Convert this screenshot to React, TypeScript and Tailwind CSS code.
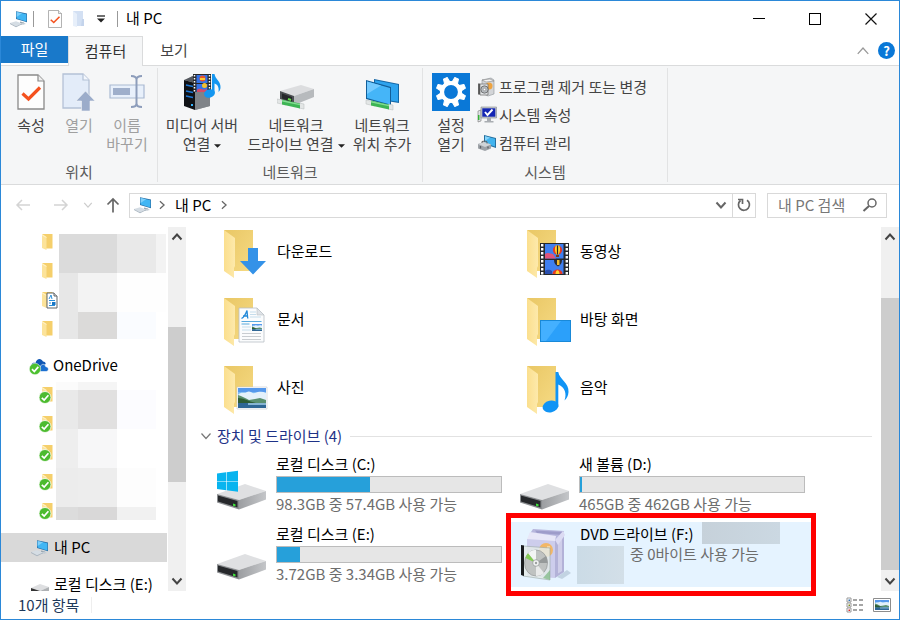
import type { ReactNode } from "react";

/* ---------- small icons ---------- */

function PcIcon({ className = "h-5 w-5" }: { className?: string }) {
  return (
    <svg viewBox="0 0 20 20" className={className} aria-hidden="true">
      <path d="M7 2.2 18 4.6v8.6L7 10z" fill="#2b6ea3" />
      <path d="M7.6 3 17.4 5.2v7.2L7.6 9.4z" fill="#41b6f4" />
      <path d="M7.6 3 13 4.2 7.6 8z" fill="#7fd0fb" />
      <path d="M11 12.4l4 1.2v1.6l-4-.8z" fill="#9aa7b2" />
      <path d="M9 14.2l6-.4 2 1.2-5 1z" fill="#c3ccd4" />
      <path d="M1 14l6-1.8 6 2.2-6 2.8z" fill="#d5dde4" />
      <path d="M1 14l6 3.2v1L1 15zM7 17.2l6-2.8v.8l-6 3z" fill="#a9b5c0" />
    </svg>
  );
}

function CheckPage({ className }: { className: string }) {
  return (
    <svg viewBox="0 0 28 36" className={className} aria-hidden="true">
      <path d="M1 1h20l6 6v28H1z" fill="#fdfdfd" stroke="#8a8a8a" strokeWidth="1.3" />
      <path d="M21 1v6h6" fill="#eee" stroke="#8a8a8a" strokeWidth="1.2" />
      <path d="M5.500 19.500l6 5.500L23 13.500" fill="none" stroke="#f4511e" strokeWidth="3.200" />
    </svg>
  );
}

function Caret() {
  return (
    <svg viewBox="0 0 8 4" className="ml-1 inline-block h-1 w-[7px] align-middle" aria-hidden="true">
      <path d="M0 0h8L4 4z" fill="#222" />
    </svg>
  );
}

function Chevron({ className, color, weight = 1.5 }: { className: string; color: string; weight?: number }) {
  return (
    <svg viewBox="0 0 12 12" className={className} aria-hidden="true">
      <path d="M1.500 3.500 6 8.500l4.500-5" fill="none" stroke={color} strokeWidth={weight} />
    </svg>
  );
}

function SmallFolder({ badge }: { badge?: "doc" | "sync" }) {
  return (
    <svg viewBox="0 0 20 20" className="h-5 w-5 overflow-visible" aria-hidden="true">
      <path d="M4 2h10.500v14.500H7z" fill="#f5cf6b" />
      <path d="M4 2l4.500 3v13L4 16z" fill="#fce39a" />
      <path d="M4 2l4.500 3v1L4 3.500z" fill="#fff1c4" />
      {badge === "doc" && (
        <g>
          <path d="M9 3h7l3 3v12H9z" fill="#fff" stroke="#5f6468" />
          <path d="M16 3v3h3" fill="#ddd" stroke="#5f6468" />
          <path d="M11 9l2-4 1 4M11 10.500h6M11 13h2M11 15.500h6" stroke="#2b8fd9" fill="none" />
          <path d="M14 12h3.500v3H14z" fill="#1976c5" />
        </g>
      )}
      {badge === "sync" && (
        <g>
          <circle cx="7" cy="12.500" r="6" fill="#4cbb2f" stroke="#fff" strokeWidth=".8" />
          <path d="M3.800 12.800l2.400 2.300 4.200-4.800" fill="none" stroke="#fff" strokeWidth="1.700" />
        </g>
      )}
    </svg>
  );
}

function OneDriveIcon() {
  return (
    <svg viewBox="0 0 20 18" className="h-[18px] w-5" aria-hidden="true">
      <path d="M3 11c-2-4 1-6 3.500-5C7.500 1.500 12 .3 14 4.500c1.700 0 2.700 1.200 2.700 2.600L9 12z" fill="#0f56b3" />
      <path d="M8 14.500c-1-4 1.800-5.200 3.200-4.500 1-3.800 5-3.300 5.600-.3 3.600.3 3.300 4.800.2 4.800z" fill="#1b6fd0" stroke="#fff" strokeWidth=".6" />
      <circle cx="6" cy="12" r="5.700" fill="#4cc02f" stroke="#fff" strokeWidth=".5" />
      <path d="M3 12.200l2.300 2.300 4-4.600" fill="none" stroke="#fff" strokeWidth="1.700" />
    </svg>
  );
}

/* ---------- ribbon icons ---------- */

function OpenIcon() {
  return (
    <svg viewBox="0 0 34 38" className="h-[38px] w-[34px]" aria-hidden="true">
      <path d="M1 1h20l6 6v28H1z" fill="#e3ecf9" stroke="#b4c1d6" strokeWidth="1.3" />
      <path d="M21 1v6h6" fill="#f3f7fd" stroke="#b4c1d6" strokeWidth="1.2" />
      <path d="M23.500 18l9.500 10h-5v10h-8.500V28H14z" fill="#9bacca" stroke="#f5f6f7" strokeWidth=".6" />
    </svg>
  );
}

function RenameIcon() {
  return (
    <svg viewBox="0 0 36 36" className="h-9 w-9" aria-hidden="true">
      <path d="M1 11h34v13H1z" fill="#e8f0fb" stroke="#aab9d2" strokeWidth="1.2" />
      <path d="M4 14h17v7H4z" fill="#9fafcb" />
      <path d="M22 2c3 0 5.500 1 5.500 3.500v24c0 2.500-2.500 3.500-5.500 3.500M33 2c-3 0-5.500 1-5.500 3.500v24c0 2.500 2.500 3.500 5.500 3.500" fill="none" stroke="#8d9dbb" strokeWidth="2" />
    </svg>
  );
}

function MediaServerIcon() {
  return (
    <svg viewBox="0 0 40 38" className="h-[38px] w-10" aria-hidden="true">
      <path d="M2 8l10-6 16 5v26l-15 4z" fill="#90949a" />
      <path d="M13 11l15-3v25l-15 4z" fill="#7f8388" />
      <path d="M2 7l11 3v27L2 33z" fill="#101216" />
      <path d="M2 7l9-4 8 2-6 5z" fill="#55595f" />
      <path d="M4 12l7 1.500M4 18l7 1.500M4 23l7 1.500" stroke="#1e78d6" strokeWidth="1.700" />
      <path d="M9 31h2v2H9z" fill="#36b5ff" />
      <path d="M11 1h18v18H11z" fill="#26282c" />
      <path d="M12.500 2v17M27.500 2v17" stroke="#fff" strokeWidth="1.500" strokeDasharray="1.500 1.500" />
      <path d="M14.500 2h11v8h-11zM14.500 11h11v8h-11z" fill="#3572e6" />
      <circle cx="20.500" cy="5.500" r="3" fill="#e8552c" />
      <path d="M18 5h5v2h-5z" fill="#f8ca35" />
      <circle cx="22.500" cy="12.500" r="2.500" fill="#f6c02f" />
      <path d="M15 17c3-3 6 1 10-1v3H15z" fill="#d64b68" />
      <ellipse cx="27.500" cy="20.500" rx="5.500" ry="4.200" fill="#1496f0" transform="rotate(-15 27.500 20.500)" />
      <path d="M30 1h2.500c.6 5 6.800 7.500 6 14-.3 2-1 3-2 4 .8-5-1-7.500-4-8.500V20H30z" fill="#1496f0" />
    </svg>
  );
}

function Cable() {
  return (
    <g>
      <path d="M0 26l9 2v4l-9-2z" fill="#e3e6e6" stroke="#b5baba" strokeWidth=".5" />
      <path d="M22 30l5 1v5l-5-1z" fill="#e3e6e6" stroke="#b5baba" strokeWidth=".5" />
      <path d="M5 26.500l18 4v5L5 31.500z" fill="#3db554" />
      <path d="M5 27l18 4v1.200L5 28.500z" fill="#86dc94" />
    </g>
  );
}

function NetDriveIcon() {
  return (
    <svg viewBox="0 0 38 38" className="h-[38px] w-[38px]" aria-hidden="true">
      <path d="M3 18l21-6 13 4-20 7z" fill="#dcdddf" />
      <path d="M17 23l20-7v8L17 32z" fill="#b7babd" />
      <path d="M3 18l14 5v8L3 26z" fill="#4b4f52" />
      <path d="M5 20.500l10 3.500v5L5 25.500z" fill="#24272a" />
      <path d="M11 26l3 1" stroke="#63e04c" strokeWidth="2" />
      <Cable />
    </svg>
  );
}

function NetPlaceIcon() {
  return (
    <svg viewBox="0 0 36 38" className="h-[38px] w-9" aria-hidden="true">
      <path d="M10 6l25 5v19l-25-4z" fill="#1466a5" />
      <path d="M11 7.200l23 4.600v17L11 25z" fill="#2ea3ee" />
      <path d="M2 7l25 7v19L2 26z" fill="#125e99" />
      <path d="M3 8.500l23 6.500v16.500L3 25z" fill="#45b5f8" />
      <path d="M3 8.500l14 4L3 21z" fill="#74caff" />
      <g transform="translate(2 1)">
        <Cable />
      </g>
    </svg>
  );
}

function GearTile() {
  const teeth = [0, 45, 90, 135, 180, 225, 270, 315];
  return (
    <svg viewBox="0 0 38 38" className="h-[38px] w-[38px]" aria-hidden="true">
      <path d="M0 0h38v38H0z" fill="#0a78d7" />
      <circle cx="19" cy="19" r="9" fill="none" stroke="#fff" strokeWidth="4.200" />
      {teeth.map((a) => (
        <path key={a} d="M16.200 9l.8-4.800h4l.8 4.800z" fill="#fff" stroke="#fff" strokeLinejoin="round" transform={`rotate(${a + 22.5} 19 19)`} />
      ))}
    </svg>
  );
}

function UninstallIcon() {
  return (
    <svg viewBox="0 0 20 20" className="h-5 w-5" aria-hidden="true">
      <path d="M5 3l9-2 3 2v14l-6 2-6-3z" fill="#d3d5d8" stroke="#8f9398" strokeWidth=".6" />
      <path d="M5 3l8-1 4 2-8 1z" fill="#f5f5f5" stroke="#777" strokeWidth=".5" />
      <circle cx="12" cy="9" r="3.500" fill="#eda340" />
      <path d="M3 7h8v11H3z" fill="#e3e6e8" stroke="#777" strokeWidth=".8" />
      <path d="M2 6.500v11" stroke="#333" strokeWidth="1.500" />
      <circle cx="7.500" cy="12.500" r="3.700" fill="#b4b9bd" stroke="#555" strokeWidth=".7" />
      <circle cx="7.500" cy="12.500" r="1.200" fill="#fff" stroke="#777" strokeWidth=".5" />
    </svg>
  );
}

function SystemIcon() {
  return (
    <svg viewBox="0 0 20 20" className="h-5 w-5" aria-hidden="true">
      <path d="M1 6l3-1v11l-3 1z" fill="#dfe2e5" stroke="#777" strokeWidth=".6" />
      <path d="M1.700 10v5" stroke="#35b335" strokeWidth="1.500" />
      <path d="M4 2h15.500v11H4z" fill="#c6cace" stroke="#84898e" strokeWidth=".6" />
      <path d="M5.300 3.300h13v8.400h-13z" fill="#1426b4" />
      <path d="M8 7l2.500 3 5-5.500" fill="none" stroke="#fff" strokeWidth="1.900" />
      <path d="M10 13h4v3h-4zM7.500 16h9v1.500h-9z" fill="#a9adb2" />
    </svg>
  );
}

function ManageIcon() {
  return (
    <svg viewBox="0 0 20 20" className="h-5 w-5" aria-hidden="true">
      <path d="M7 2l12 3v10L7 11z" fill="#27709f" />
      <path d="M8 3.200l10 2.500v7.800l-10-3.200z" fill="#42b4ef" />
      <path d="M8 3.200l5 1.200L8 8z" fill="#86d4fa" />
      <path d="M1 11l6-2 7 2.500v4L8 18l-7-2.500z" fill="#9ea3a8" />
      <path d="M1 11l6-2 7 2.500-6 2.500z" fill="#d0d4d7" />
      <path d="M5 10v-1.500l3-.5 2 .8v1.700" fill="none" stroke="#666" />
      <path d="M3.500 13v2.500M11 13.500v2" stroke="#5d6166" strokeWidth="1.300" />
    </svg>
  );
}

/* ---------- large item icons ---------- */

function LargeFolder({ children }: { children: ReactNode }) {
  return (
    <svg viewBox="0 0 52 50" className="h-[50px] w-[52px] shrink-0" aria-hidden="true">
      <defs>
        <linearGradient id="folderBack" x1="0" y1="0" x2="1" y2="1">
          <stop offset="0" stopColor="#e9c765" />
          <stop offset="1" stopColor="#f6da83" />
        </linearGradient>
        <linearGradient id="folderFlap" x1="0" y1="0" x2="1" y2="0">
          <stop offset="0" stopColor="#fbdf8e" />
          <stop offset="1" stopColor="#fde9ab" />
        </linearGradient>
      </defs>
      <path d="M8 2h29v41H17z" fill="url(#folderBack)" />
      <path d="M8 2l11 8v28l-1 2v10L8 43z" fill="url(#folderFlap)" />
      {children}
    </svg>
  );
}

function Scenery({ x, y, w, h }: { x: number; y: number; w: number; h: number }) {
  return (
    <svg x={x} y={y} width={w} height={h} viewBox="0 0 28 20" preserveAspectRatio="none">
      <path d="M0 0h28v20H0z" fill="#7ab8f2" />
      <path d="M0 0h28v4H0z" fill="#5598ec" />
      <path d="M0 7c3-4 6-1 9-3s5 2 8 1 7-2 11 0v9H0z" fill="#e3f0fb" />
      <path d="M0 7c4 1 7 3 11 5l6-1 5-1 6 2v3H0z" fill="#5a9070" />
      <path d="M0 10c5 0 10 3 18 5H0z" fill="#2d5c35" />
      <path d="M0 15h28v5H0z" fill="#2e6695" />
      <path d="M10 15h18v2H10z" fill="#86b4d3" />
    </svg>
  );
}

function Balloons({ y }: { y: number }) {
  return (
    <g transform={`translate(0 ${y})`}>
      <path d="M26 0h18.500v14.500H26z" fill="#3f7ff0" />
      <path d="M26 10c3-2 6 0 8 0l3 4.500H26z" fill="#e0547c" />
      <circle cx="38.500" cy="6" r="4.600" fill="#e83a22" />
      <path d="M36.800 1.500c-1.500 3-1 6 .7 9h2c1.700-3 2.200-6 .7-9z" fill="#ffd42e" />
      <path d="M38.500 1.500v9" stroke="#262626" strokeWidth="1.200" />
      <path d="M37 11h3v2h-3z" fill="#7a3b18" />
    </g>
  );
}

const downloads = <path d="M32 20h10v13h8L37 46.500 24 33h8z" fill="#3492e8" />;

const documents = (
  <g>
    <path d="M23 12h18l7 7v27H23z" fill="#fbfcfd" stroke="#b9bfc5" strokeWidth=".8" />
    <path d="M41 12v7h7z" fill="#dfe3e8" stroke="#b9bfc5" strokeWidth=".6" />
    <path d="M25.500 22.500c2-1 4-4 5.500-8 .3 3 .3 5 .8 8M27 20h4.500" fill="none" stroke="#2389d8" strokeWidth="1.300" />
    <path d="M34 16h6M34 18.500h6M34 21h11M26 31h9M26 34h9" stroke="#c5ddec" />
    <path d="M25.500 25.500h20M25.500 28h8" stroke="#58aade" strokeWidth="1.200" />
    <path d="M26 37.500h19M26 40.500h19M26 43.500h19" stroke="#c9cdd1" />
    <Scenery x={36} y={28} w={10} h={7} />
  </g>
);

const pictures = (
  <g>
    <path d="M21 23h30v22H21z" fill="#fff" stroke="#c3c8cc" strokeWidth=".6" />
    <Scenery x={22} y={24} w={28} h={20} />
  </g>
);

const videos = (
  <g>
    <path d="M21 15h29v32H21z" fill="#27292c" />
    <path d="M23.200 16v31M47.800 16v31" stroke="#fff" strokeWidth="2.400" strokeDasharray="2.400 1.600" />
    <Balloons y={16} />
    <path d="M26 32h18.500v14H26z" fill="#3f7ff0" />
    <path d="M35 32c0 3.500 1.500 5 4 6.500 2.500-1.500 4-3 4-6.500z" fill="#2d2d34" />
    <path d="M38 32h2.500v5H38z" fill="#f5bb2c" />
    <path d="M26 43c3-2 5-1 7 0v3h-7z" fill="#2a4fae" />
    <path d="M33.500 46c0-6 10-6 10 0z" fill="#e83a22" />
    <path d="M36.500 46c0-5 4-5 4 0z" fill="#ffd42e" />
  </g>
);

const desktop = (
  <g>
    <path d="M21 24h31v22H21z" fill="#1989d8" />
    <path d="M22 25h29v20H22z" fill="#2ba0fa" />
    <path d="M22 25h20L27 45h-5z" fill="#44b0ff" />
  </g>
);

const music = (
  <g fill="#1094f5">
    <ellipse cx="31.500" cy="42.500" rx="8" ry="5.800" transform="rotate(-12 31.500 42.500)" />
    <path d="M36.500 8h2.800c.8 7 11 11 10.200 20-.3 4-1.500 6-4 8.500 2.400-7 .5-13-6.200-16V43h-2.800z" />
  </g>
);

function DriveIcon({ system = false }: { system?: boolean }) {
  return (
    <svg viewBox="0 0 52 60" className="h-[60px] w-[52px] shrink-0" aria-hidden="true">
      <defs>
        <linearGradient id="driveSide" x1="0" y1="0" x2="1" y2="0">
          <stop offset="0" stopColor="#9c9ea1" />
          <stop offset="1" stopColor="#c4c6c9" />
        </linearGradient>
      </defs>
      <path d="M1 42l28-10 21 7-27 9z" fill="#dfe0e2" />
      <path d="M23 48l27-9v8.500L23 57.500z" fill="url(#driveSide)" />
      <path d="M1 42l22 6v9.500L1 50.500z" fill="#8b8e91" />
      <path d="M2 43.500l19.500 5.500v6.500L2 49.500z" fill="#26282b" />
      <path d="M17 51.500l2.500.7v2.300l-2.500-.7z" fill="#3fe03a" />
      {system && <path d="M1 21.500l9-1.200v8.700H1zM10.600 20.200L22 18.700v10.300H10.600zM1 29.600h9v8.600l-9-1.200zM10.600 29.600H22v10.200l-11.400-1.500z" fill="#08b4ef" />}
    </svg>
  );
}

function DvdIcon() {
  return (
    <svg viewBox="0 0 52 60" className="h-[60px] w-[52px] shrink-0" aria-hidden="true">
      <path d="M38 55l10-7 4 3-9 6z" fill="#9fb3c6" opacity=".5" />
      <path d="M8 17l28-1v40L8 54z" fill="#cdcdec" />
      <path d="M36 16l9-4v38l-9 6z" fill="#b3b2d8" />
      <path d="M39 18l4-2v33l-4 2.500z" fill="#cfcee9" />
      <path d="M14 7l31 2-4 9-31-5z" fill="#b7b6dd" />
      <path d="M16 8.500l28 1.500-1 3-25-2z" fill="#9e9cca" />
      <path d="M8 17l3-7 26 4-1 5z" fill="#e8e7f8" />
      <path d="M36 18l8-9 2 4-7 10z" fill="#dcdbf3" />
      <circle cx="27" cy="28" r="7" fill="#f2b767" />
      <path d="M28 24h3v4h-3z" fill="#f8d59e" />
      <path d="M4 24l27 2v32L4 54z" fill="#e4ebe9" opacity=".85" stroke="#9aa8a5" strokeWidth=".7" />
      <path d="M2 23l3 .5V54l-3-1z" fill="#191b1d" />
      <ellipse cx="17" cy="41" rx="11.500" ry="13" fill="#bfc2c1" stroke="#8d9190" strokeWidth=".6" />
      <path d="M17 41L9 31.500c2-2.500 5-4 8-3.500z" fill="#f3f4f4" />
      <path d="M17 41l8 10c-2 2-5 3-8 3z" fill="#e9eaea" />
      <path d="M17 41l-10.500-5c.5-2 1.500-3.500 2.500-4.800z" fill="#85cb55" />
      <path d="M17 41l10-7c1 2 1.500 4 1.500 7z" fill="#969a9a" />
      <circle cx="17" cy="41" r="3.300" fill="#f2f3f3" stroke="#8d9190" strokeWidth=".7" />
      <circle cx="17" cy="41" r="1.200" fill="#9da1a0" />
      <path d="M24 56l7-8v10z" fill="#79b57f" opacity=".7" />
    </svg>
  );
}

/* ---------- ribbon ---------- */

function RibbonButton({ icon, lines, caret = false, disabled = false, width }: { icon: ReactNode; lines: string[]; caret?: boolean; disabled?: boolean; width: string }) {
  return (
    <button type="button" disabled={disabled} className={`flex flex-col items-center whitespace-nowrap ${width} ${disabled ? "text-[#a0a0a0]" : "text-[#444]"}`}>
      <span className="mb-1 flex h-[38px] items-center justify-center">{icon}</span>
      {lines.map((line, i) => (
        <span key={line} className="block leading-[19px]">
          {line}
          {caret && i === lines.length - 1 && <Caret />}
        </span>
      ))}
    </button>
  );
}

function RibbonGroup({ label, width, inset, children }: { label: string; width: string; inset: string; children: ReactNode }) {
  return (
    <section aria-label={label} className={`my-[2px] flex flex-col justify-between border-r border-[#e2e3e4] pt-[5px] ${width}`}>
      <div className={`flex ${inset}`}>{children}</div>
      <div className="text-center leading-5 text-[#5a5a5a]">{label}</div>
    </section>
  );
}

function RibbonLink({ icon, children }: { icon: ReactNode; children: string }) {
  return (
    <button type="button" className="flex h-7 items-center gap-[2px] whitespace-nowrap text-[#444]">
      {icon}
      {children}
    </button>
  );
}

/* ---------- scroll bar ---------- */

function ScrollBar({ before, thumb, after }: { before: number; thumb: number; after: number }) {
  return (
    <div className="flex w-[18px] shrink-0 flex-col bg-[#f0f0f0]" aria-hidden="true">
      <div className="flex h-5 items-center justify-center">
        <Chevron className="h-3 w-3 rotate-180" color="#444" weight={2} />
      </div>
      <div className="flex flex-1 flex-col">
        <div style={{ flexGrow: before }} />
        <div className="bg-[#cdcdcd]" style={{ flexGrow: thumb }} />
        <div style={{ flexGrow: after }} />
      </div>
      <div className="flex h-5 items-center justify-center">
        <Chevron className="h-3 w-3" color="#444" weight={2} />
      </div>
    </div>
  );
}

/* ---------- files ---------- */

const folders = [
  { name: "다운로드", art: downloads },
  { name: "동영상", art: videos },
  { name: "문서", art: documents },
  { name: "바탕 화면", art: desktop },
  { name: "사진", art: pictures },
  { name: "음악", art: music },
];

const drives = [
  { name: "로컬 디스크 (C:)", usage: "98.3GB 중 57.4GB 사용 가능", used: 41.6, system: true },
  { name: "새 볼륨 (D:)", usage: "465GB 중 462GB 사용 가능", used: 1, system: false },
  { name: "로컬 디스크 (E:)", usage: "3.72GB 중 3.34GB 사용 가능", used: 10.2, system: false },
];

function Drive({ name, usage, used, system }: (typeof drives)[number]) {
  return (
    <li className="flex gap-2 pr-[6px] pl-2">
      <DriveIcon system={system} />
      <div className="flex-1">
        <div className="leading-6">{name}</div>
        <div role="meter" aria-label={name} aria-valuenow={used} aria-valuemin={0} aria-valuemax={100} className="h-[17px] border border-[#bcbcbc] bg-[#e6e6e6]">
          <div className="h-full bg-[#26a0da]" style={{ width: `${used}%` }} />
        </div>
        <div className="leading-[22px] text-[#6d6d6d]">{usage}</div>
      </div>
    </li>
  );
}

export default function App() {
  return (
    <div className="flex h-screen flex-col overflow-hidden border border-[#2b88d8] bg-white font-['Noto_Sans_CJK_KR',sans-serif] text-[15px] text-black">
      <header className="flex h-[35px] shrink-0 items-center">
        <PcIcon className="ml-2 h-5 w-5" />
        <span className="ml-1 h-4 w-px bg-[#999]" />
        <button type="button" aria-label="속성" className="ml-[14px]">
          <CheckPage className="h-[18px] w-[14px]" />
        </button>
        <button type="button" aria-label="새 폴더" className="ml-[10px]">
          <svg viewBox="0 0 14 18" className="h-[18px] w-[14px]" aria-hidden="true">
            <path d="M1 1h10v15H1z" fill="#d3e0f3" />
            <path d="M1 1l4 3v13l-4-1z" fill="#e7effa" />
            <path d="M10 9h2v7h-3z" fill="#c4d4ec" />
          </svg>
        </button>
        <button type="button" aria-label="빠른 실행 도구 모음 사용자 지정" className="ml-[11px]">
          <svg viewBox="0 0 8 8" className="h-2 w-2" aria-hidden="true">
            <path d="M0 1h8" stroke="#222" strokeWidth="1.300" />
            <path d="M0 3.500h8L4 7.500z" fill="#222" />
          </svg>
        </button>
        <span className="ml-3 h-4 w-px bg-[#999]" />
        <h1 className="ml-2">내 PC</h1>
        <div className="ml-auto flex h-full">
          <button type="button" aria-label="최소화" className="flex w-14 items-center justify-center">
            <span className="h-px w-3 bg-black" />
          </button>
          <button type="button" aria-label="최대화" className="flex w-14 items-center justify-center">
            <span className="h-3 w-3 border border-black" />
          </button>
          <button type="button" aria-label="닫기" className="flex w-14 items-center justify-center">
            <svg viewBox="0 0 12 12" className="h-3 w-3" aria-hidden="true">
              <path d="M.5.5l11 11M11.500.5l-11 11" stroke="#111" strokeWidth="1.200" />
            </svg>
          </button>
        </div>
      </header>

      <nav className="flex h-[30px] shrink-0 items-start border-b border-[#dadbdc]">
        <button type="button" className="h-[27px] w-[67px] bg-[#1979ca] text-white">파일</button>
        <button type="button" className="h-[30px] w-[75px] border-x border-t border-[#dadbdc] bg-[#f5f6f7] text-[#333]">컴퓨터</button>
        <button type="button" className="h-[28px] w-[62px] text-[#444]">보기</button>
        <div className="ml-auto flex h-[29px] items-center gap-2 pr-1">
          <button type="button" aria-label="리본 최소화">
            <Chevron className="h-[14px] w-[14px] rotate-180" color="#999" weight={1.1} />
          </button>
          <button type="button" aria-label="도움말" className="h-[17px] w-[17px] rounded-full bg-[#0a78d7] text-center text-[13px] leading-[17px] font-bold text-white">?</button>
        </div>
      </nav>

      <div className="flex h-[119px] shrink-0 border-b border-[#dadbdc] bg-[#f5f6f7]">
        <RibbonGroup label="위치" width="w-[157px]" inset="pl-[6px]">
          <RibbonButton width="w-12" icon={<CheckPage className="h-9 w-7" />} lines={["속성"]} />
          <RibbonButton width="w-12" disabled icon={<OpenIcon />} lines={["열기"]} />
          <RibbonButton width="w-12" disabled icon={<RenameIcon />} lines={["이름", "바꾸기"]} />
        </RibbonGroup>
        <RibbonGroup label="네트워크" width="w-[265px]" inset="pl-1">
          <RibbonButton width="w-20" caret icon={<MediaServerIcon />} lines={["미디어 서버", "연결"]} />
          <RibbonButton width="w-[108px]" caret icon={<NetDriveIcon />} lines={["네트워크", "드라이브 연결"]} />
          <RibbonButton width="w-16" icon={<NetPlaceIcon />} lines={["네트워크", "위치 추가"]} />
        </RibbonGroup>
        <RibbonGroup label="시스템" width="w-[245px]" inset="pl-[9px]">
          <RibbonButton width="w-[38px]" icon={<GearTile />} lines={["설정", "열기"]} />
          <div className="ml-[7px]">
            <RibbonLink icon={<UninstallIcon />}>프로그램 제거 또는 변경</RibbonLink>
            <RibbonLink icon={<SystemIcon />}>시스템 속성</RibbonLink>
            <RibbonLink icon={<ManageIcon />}>컴퓨터 관리</RibbonLink>
          </div>
        </RibbonGroup>
      </div>

      <div className="flex h-10 shrink-0 items-center pr-3 pl-[14px]">
        <button type="button" aria-label="뒤로">
          <svg viewBox="0 0 16 16" className="h-4 w-4" aria-hidden="true">
            <path d="M15 8H2M7 3L2 8l5 5" fill="none" stroke="#d4d4d4" strokeWidth="1.500" />
          </svg>
        </button>
        <button type="button" aria-label="앞으로" className="ml-[22px]">
          <svg viewBox="0 0 16 16" className="h-4 w-4" aria-hidden="true">
            <path d="M1 8h13M9 3l5 5-5 5" fill="none" stroke="#d4d4d4" strokeWidth="1.500" />
          </svg>
        </button>
        <button type="button" aria-label="최근 위치" className="ml-[14px]">
          <Chevron className="h-[10px] w-[10px]" color="#ccc" />
        </button>
        <button type="button" aria-label="위로" className="ml-3">
          <svg viewBox="0 0 16 16" className="h-4 w-4" aria-hidden="true">
            <path d="M8 15.500V2M2.500 7.500L8 2l5.500 5.500" fill="none" stroke="#666" strokeWidth="1.700" />
          </svg>
        </button>
        <div className="ml-2 flex h-[25px] flex-1 items-center border border-[#d9d9d9] pl-[3px]">
          <PcIcon className="h-5 w-5" />
          <Chevron className="ml-1 h-[10px] w-[10px] -rotate-90" color="#666" />
          <span className="ml-2">내 PC</span>
          <Chevron className="ml-2 h-[10px] w-[10px] -rotate-90" color="#666" />
          <button type="button" aria-label="이전 위치" className="mr-[5px] ml-auto">
            <Chevron className="h-3 w-3" color="#666" weight={2} />
          </button>
          <button type="button" aria-label="새로 고침" className="flex h-full w-[23px] items-center justify-center border-l border-[#d9d9d9]">
            <svg viewBox="0 0 16 16" className="h-4 w-4" aria-hidden="true">
              <path d="M11 3.200A5.500 5.500 0 1 1 4.500 3.500M2 2.500h4.500V7" fill="none" stroke="#666" strokeWidth="1.700" />
            </svg>
          </button>
        </div>
        <label className="ml-[11px] flex h-[25px] w-[120px] items-center border border-[#d9d9d9] pr-2 pl-[10px]">
          <input type="search" aria-label="내 PC 검색" placeholder="내 PC 검색" className="w-0 flex-1 bg-transparent outline-none placeholder:text-[#777]" />
          <svg viewBox="0 0 16 16" className="h-4 w-4" aria-hidden="true">
            <circle cx="10" cy="6" r="4" fill="none" stroke="#666" strokeWidth="1.500" />
            <path d="M7 9l-5.500 5" stroke="#666" strokeWidth="2" />
          </svg>
        </label>
      </div>

      <div className="mt-[2px] flex min-h-0 flex-1">
        <aside className="flex w-[167px] shrink-0 flex-col gap-2">
          <div className="flex shrink-0">
            <div className="w-[58px] pl-[37px]">
              <div className="flex h-[29px] items-center"><SmallFolder /></div>
              <div className="flex h-[29px] items-center"><SmallFolder /></div>
              <div className="flex h-[29px] items-center"><SmallFolder badge="doc" /></div>
              <div className="flex h-[29px] items-center"><SmallFolder /></div>
            </div>
            <div className="mt-[7px] grid h-[105px] grid-cols-[19px_39px_39px_10px] grid-rows-[39px_39px_27px]">
              <div className="col-span-2 bg-[#dbdbdb]" />
              <div className="bg-[#e9e9e9]" />
              <div className="bg-[#f3f3f3]" />
              <div className="bg-[#e7e7e7]" />
              <div className="bg-[#f3f3f3]" />
              <div className="col-span-2 bg-[#fefefe]" />
              <div className="bg-[#e7e7e7]" />
              <div className="bg-[#dbdad9]" />
              <div className="bg-[#fafcff]" />
            </div>
          </div>
          <div className="shrink-0">
            <a href="#onedrive" className="flex h-[29px] items-center gap-1 pl-7">
              <OneDriveIcon />
              OneDrive
            </a>
            <div className="flex">
              <div className="w-[55px] pl-[37px]">
                {[1, 2, 3, 4, 5].map((n) => (
                  <div key={n} className="flex h-[29px] items-center"><SmallFolder badge="sync" /></div>
                ))}
              </div>
              <div className="mt-[2px] grid h-[138px] grid-cols-[22px_39px_39px] grid-rows-[8px_39px_39px_39px_13px]">
                <div className="bg-[#fbfbfb]" />
                <div className="bg-[#f5f5f5]" />
                <div className="bg-white" />
                <div className="bg-[#e9e9e9]" />
                <div className="bg-[#e1e0e0]" />
                <div className="bg-[#fcfcff]" />
                <div className="bg-[#eeeeee]" />
                <div className="bg-[#f7f7f8]" />
                <div className="bg-white" />
                <div className="bg-[#ececec]" />
                <div className="bg-[#ededed]" />
                <div className="bg-[#fdfdfd]" />
                <div className="bg-[#dcdcdc]" />
                <div className="bg-[#d9d8d8]" />
                <div className="bg-[#f1f1f1]" />
              </div>
            </div>
          </div>
          <a href="#pc" aria-current="page" className="mr-px flex h-[29px] shrink-0 items-center gap-1 bg-[#d9d9d9] pl-[29px]">
            <PcIcon />
            내 PC
          </a>
          <a href="#drive-e" className="flex h-[29px] shrink-0 items-center gap-1 pl-[29px] whitespace-nowrap">
            <svg viewBox="0 0 20 20" className="h-5 w-5" aria-hidden="true">
              <path d="M1 13l9-4 9 3-9 4z" fill="#dedfe1" />
              <path d="M1 13l9 3H1z" fill="#333" />
              <path d="M10 16l9-4v4z" fill="#aeb1b4" />
            </svg>
            로컬 디스크 (E:)
          </a>
        </aside>
        <ScrollBar before={80} thumb={155} after={89} />

        <main className="min-w-0 flex-1 pl-[22px]">
          <ul className="grid grid-cols-[repeat(auto-fill,300px)] gap-x-[3px] gap-y-[18px] pt-px">
            {folders.map((f) => (
              <li key={f.name} className="flex h-[50px] gap-[9px] pl-2 leading-[46px]">
                <LargeFolder>{f.art}</LargeFolder>
                {f.name}
              </li>
            ))}
          </ul>
          <h2 className="mt-[6px] -ml-2 flex h-8 items-center text-[#1e3287]">
            <Chevron className="mr-[5px] h-3 w-3" color="#777" weight={1.2} />
            장치 및 드라이브 (4)
            <span className="mr-[9px] ml-2 h-px flex-1 bg-[#e2e2e2]" />
          </h2>
          <ul className="grid grid-cols-[repeat(auto-fill,300px)] gap-x-[3px] gap-y-[7px]">
            {drives.map((d) => (
              <Drive key={d.name} {...d} />
            ))}
            <li className="relative flex h-[65px] gap-[6px] bg-[#e5f3ff] pl-2">
              <DvdIcon />
              <div className="flex-1">
                <div className="flex h-6 items-start justify-between pr-[31px] pl-[3px] leading-6">
                  DVD 드라이브 (F:)
                  <span className="h-[22px] w-[78px] bg-gradient-to-r from-[#c6d1da] to-[#cbd8e2]" />
                </div>
                <div className="flex gap-[6px] leading-4 text-[#6d6d6d]">
                  <span className="h-[38px] w-[47px] bg-gradient-to-r from-[#cbdbe6] to-[#d3dfe8]" />
                  중 0바이트 사용 가능
                </div>
              </div>
              <div className="absolute -inset-x-[5px] -top-[9px] -bottom-[9px] border-[5px] border-[#ff0000]" />
            </li>
          </ul>
        </main>
        <ScrollBar before={51} thumb={272} after={1} />
      </div>

      <footer className="flex h-7 shrink-0 items-center pr-2 pl-[17px] text-[#1e395b]">
        10개 항목
        <span className="ml-3 h-4 w-px bg-[#eee]" />
        <button type="button" aria-label="자세히" className="ml-auto">
          <svg viewBox="0 0 18 16" className="h-4 w-[18px]" aria-hidden="true">
            <path d="M1 1h4v4H1zM1 6h4v4H1zM1 11h4v4H1z" fill="#fff" stroke="#999" />
            <path d="M2.500 2.500h1.500v1.500H2.500z" fill="#2a72b5" />
            <path d="M2.500 7.500h1.500v1.500H2.500z" fill="#7a8b1c" />
            <path d="M2.500 12.500h1.500v1.500H2.500z" fill="#d22" />
            <path d="M7 3h4M13 3h4M7 8h4M13 8h4M7 13h4M13 13h4" stroke="#888" strokeWidth="1.300" />
          </svg>
        </button>
        <button type="button" aria-label="큰 아이콘" className="ml-[9px]">
          <svg viewBox="0 0 18 14" className="h-[14px] w-[18px]" aria-hidden="true">
            <path d="M.5.5h17v13H.5z" fill="#fff" stroke="#8d8d8d" />
            <Scenery x={2} y={2} w={14} h={10} />
          </svg>
        </button>
      </footer>
    </div>
  );
}
